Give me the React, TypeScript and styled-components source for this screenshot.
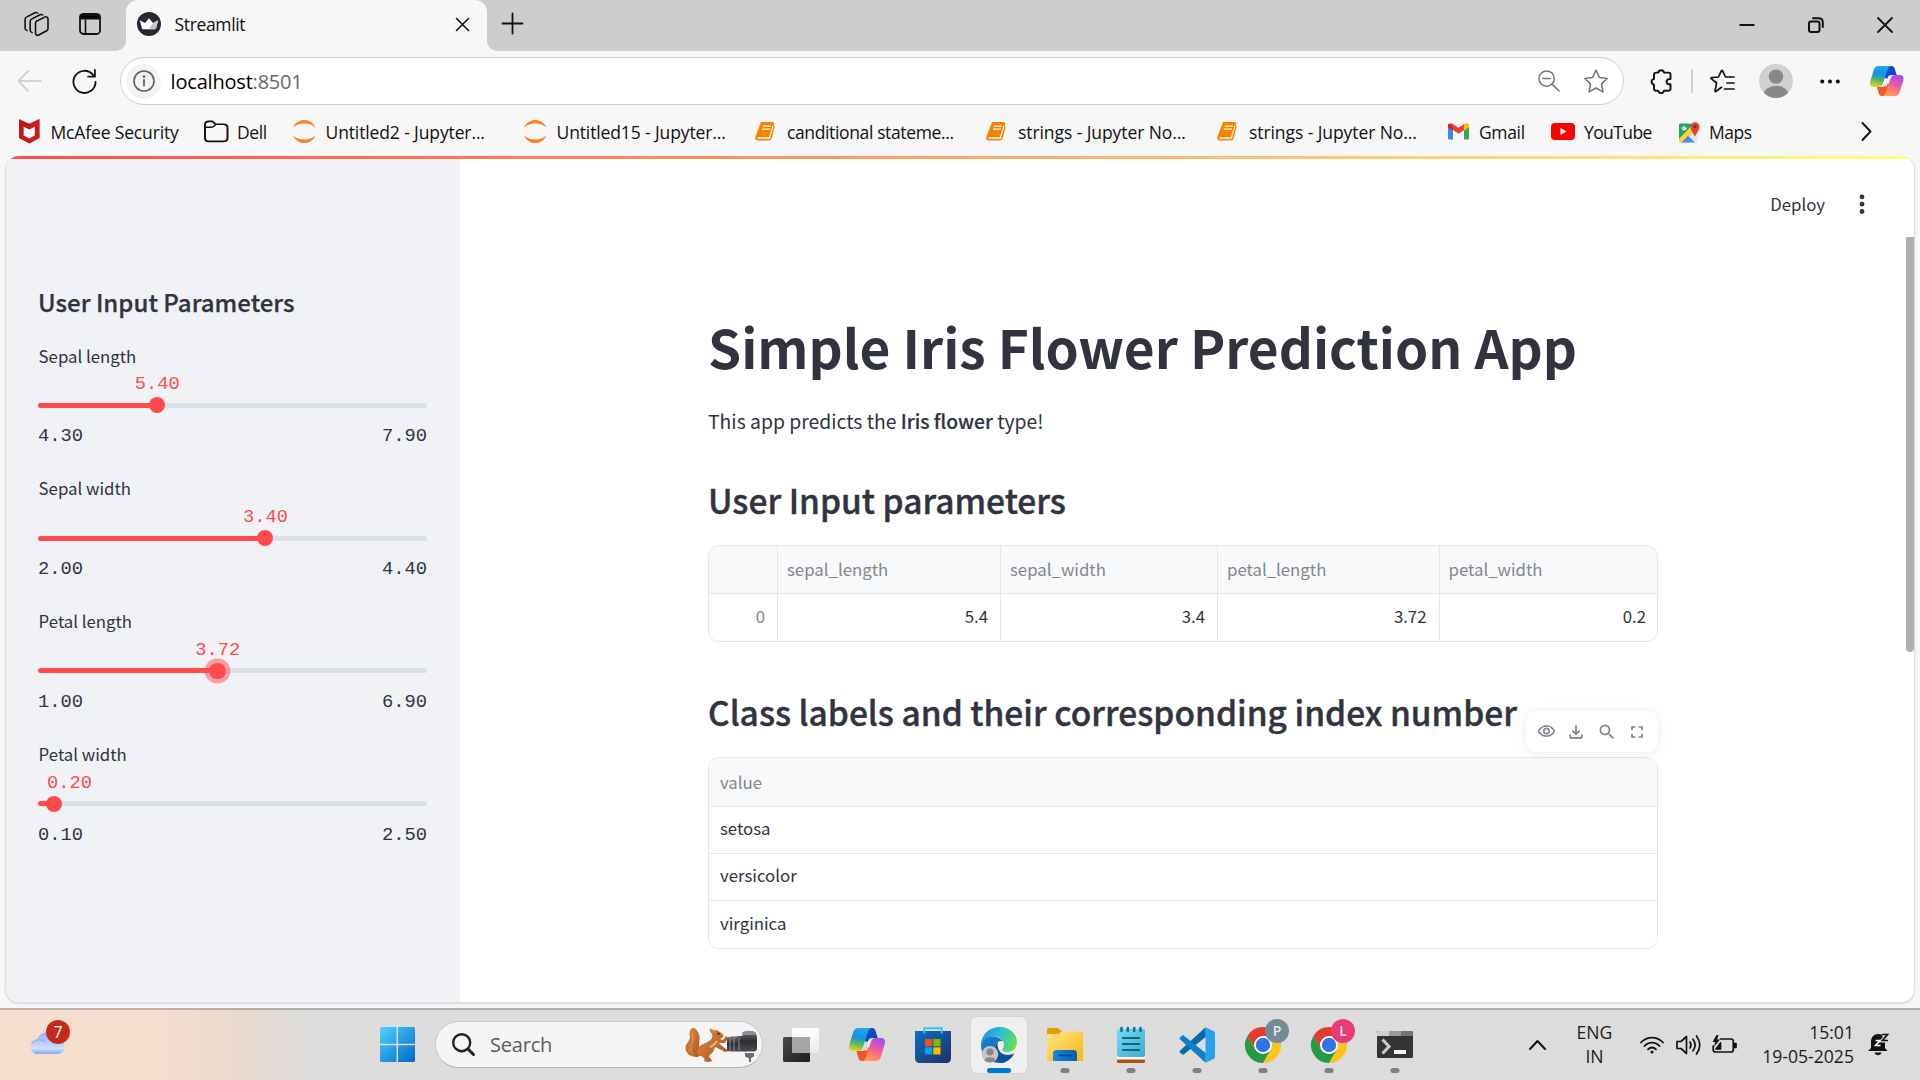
import React from "react";
import styled, { createGlobalStyle, css } from "styled-components";
import { MdOutlineVisibility, MdOutlineFileDownload, MdSearch, MdFullscreen } from "react-icons/md";

const UI = `"Open Sans", "Noto Sans", sans-serif`;
const SOURCE = `"Noto Sans CJK SC", "Open Sans", sans-serif`;
const MONO = `"Liberation Mono", monospace`;
const INK = "#31333f";
const RED = "#ff4b4b";
const LINE = "#e5e6ea";

const Global = createGlobalStyle`
  * { box-sizing: border-box; }
  html, body { margin: 0; padding: 0; }
  body { width: 1920px; height: 1080px; overflow: hidden; background: #f7f7f7; }
  svg { display: block; flex: none; overflow: visible; }
  h1, h2, p { margin: 0; }
`;

const Screen = styled.div`
  width: 1920px;
  height: 1080px;
  display: flex;
  flex-direction: column;
  background: #f7f7f7;
  font-family: ${UI};
  color: #111;
`;

/* ---------- browser frame ---------- */
const TabStrip = styled.header`
  height: 51px;
  flex: none;
  display: flex;
  background: #cdcdcd;
`;
const StripTools = styled.div`
  width: 126px;
  display: flex;
  align-items: center;
  padding: 0 0 3px 24px;
  gap: 30px;
`;
const Tab = styled.div`
  position: relative;
  width: 361px;
  height: 51px;
  display: flex;
  align-items: center;
  padding: 0 17px 3px 11px;
  background: #f7f7f7;
  border-radius: 12px 12px 0 0;
  &::before,
  &::after {
    content: "";
    position: absolute;
    bottom: 0;
    width: 10px;
    height: 10px;
  }
  &::before {
    left: -10px;
    background: radial-gradient(circle at 0 0, transparent 9.5px, #f7f7f7 10px);
  }
  &::after {
    right: -10px;
    background: radial-gradient(circle at 100% 0, transparent 9.5px, #f7f7f7 10px);
  }
`;
const TabTitle = styled.span`
  flex: 1;
  margin-left: 13.5px;
  font-size: 17.5px;
  line-height: 24px;
  letter-spacing: -0.35px;
`;
const NewTab = styled.div`
  display: flex;
  align-items: center;
  padding: 0 0 4px 15px;
`;
const WindowButtons = styled.div`
  margin-left: auto;
  display: flex;
  align-items: center;
  gap: 53px;
  padding: 0 27px 1px 0;
`;

const Toolbar = styled.div`
  height: 60px;
  flex: none;
  display: flex;
  align-items: center;
`;
const NavButtons = styled.div`
  width: 120px;
  display: flex;
  align-items: center;
  gap: 30px;
  padding-left: 17px;
`;
const Address = styled.div`
  width: 1504px;
  height: 48px;
  display: flex;
  align-items: center;
  padding: 0 14px 0 5px;
  background: #fff;
  border: 1.5px solid #cfcfcf;
  border-radius: 24px;
`;
const InfoBadge = styled.div`
  width: 35px;
  height: 35px;
  display: grid;
  place-items: center;
  border-radius: 50%;
  background: #f3f3f3;
`;
const Url = styled.div`
  flex: 1;
  margin-left: 9.6px;
  padding-top: 1px;
  font-size: 20px;
  line-height: 28px;
  letter-spacing: -0.2px;
  color: #666;
  b { font-weight: 400; color: #000; }
`;
const AddressIcons = styled.div`
  display: flex;
  align-items: center;
  gap: 23px;
`;
const ToolbarIcons = styled.div`
  flex: 1;
  display: flex;
  align-items: center;
  padding-left: 25px;
`;
const Divider = styled.i`
  width: 2px;
  height: 24px;
  margin: 0 16.5px 0 18px;
  background: #cfcfcf;
`;
const Avatar = styled.div`
  margin: 0 27px 0 24.5px;
`;
const CopilotSlot = styled.div`
  margin-left: 29.5px;
`;

const Bookmarks = styled.nav`
  height: 45px;
  flex: none;
  display: flex;
  align-items: center;
  padding: 0 48px 4px 19px;
`;
const Bookmark = styled.div<{ $w: number; $gap?: number; $ls?: number }>`
  flex: none;
  width: ${(p) => p.$w}px;
  display: flex;
  align-items: center;
  gap: ${(p) => p.$gap ?? 9}px;
  font-size: 17.5px;
  line-height: 24px;
  letter-spacing: ${(p) => p.$ls ?? 0}px;
  white-space: nowrap;
`;
const Overflow = styled.div`
  margin-left: auto;
`;

/* ---------- page ---------- */
const Page = styled.main`
  width: 1910px;
  height: 847px;
  margin: 0 0 5px 5px;
  flex: none;
  display: flex;
  flex-direction: column;
  border: 1px solid #dfdfe1;
  border-top: 0;
  border-radius: 14px;
  background: #fff;
  overflow: hidden;
  box-shadow: 0 1px 2px rgba(0, 0, 0, 0.12);
  font-family: ${SOURCE};
  color: ${INK};
`;
const Decoration = styled.div`
  height: 3px;
  flex: none;
  background: linear-gradient(90deg, #ff4b4b, #fffd80);
`;
const Split = styled.div`
  flex: 1;
  display: flex;
`;
const Sidebar = styled.aside`
  width: 454px;
  flex: none;
  padding: 126.6px 33px 0 32px;
  background: #f0f2f6;
`;
const SideTitle = styled.h2`
  margin-bottom: 26px;
  font-size: 24.05px;
  line-height: 32px;
  font-weight: 500;
  -webkit-text-stroke: 0.25px ${INK};
`;
const Field = styled.div`
  height: 105.3px;
  margin-bottom: 27.6px;
  display: flex;
  flex-direction: column;
`;
const FieldLabel = styled.div`
  padding-left: 0.6px;
  font-size: 16.8px;
  line-height: 24px;
`;
const Slider = styled.div`
  height: 40.6px;
  margin-top: 7.3px;
  padding-top: 27.8px;
  position: relative;
`;
const Track = styled.div`
  height: 5px;
  border-radius: 3px;
  background: #dbdfea;
`;
const Fill = styled.div`
  height: 5px;
  border-radius: 3px 0 0 3px;
  background: ${RED};
`;
const Thumb = styled.i<{ $focus?: boolean }>`
  position: absolute;
  top: 22.1px;
  width: 16.4px;
  height: 16.4px;
  margin-left: -8.2px;
  border-radius: 50%;
  background: ${RED};
  ${(p) => p.$focus && css`box-shadow: 0 0 0 4.4px rgba(255, 75, 75, 0.5);`}
`;
const ThumbValue = styled.span`
  position: absolute;
  top: -1px;
  width: 46px;
  margin-left: -22px;
  font-family: ${MONO};
  font-size: 18.75px;
  line-height: 20px;
  color: ${RED};
`;
const Range = styled.div`
  margin-top: 8.6px;
  display: flex;
  justify-content: space-between;
  font-family: ${MONO};
  font-size: 18.75px;
  line-height: 24px;
`;

const Main = styled.section`
  flex: 1;
  display: flex;
  flex-direction: column;
`;
const AppHeader = styled.div`
  height: 78px;
  flex: none;
  display: flex;
  align-items: center;
  justify-content: flex-end;
  gap: 32px;
  padding: 12px 46px 0 0;
  font-size: 16.8px;
  line-height: 24px;
`;
const Scroller = styled.div`
  flex: 1;
  display: flex;
  justify-content: flex-end;
`;
const ScrollThumb = styled.i`
  width: 8px;
  height: 415px;
  border-radius: 0 0 4px 4px;
  background: #aeaeb3;
`;
const Article = styled.div`
  width: 950px;
  margin: 0 auto;
  padding-top: 77px;
`;
const Title = styled.h1`
  font-size: 53.15px;
  line-height: 64px;
  font-weight: 700;
  white-space: nowrap;
`;
const Lead = styled.p`
  margin-top: 27.7px;
  font-size: 19.35px;
  line-height: 30px;
  b { font-weight: 500; -webkit-text-stroke: 0.2px ${INK}; }
`;
const Heading = styled.h2<{ $top: number }>`
  margin-top: ${(p) => p.$top}px;
  margin-bottom: 24.6px;
  font-size: 33.5px;
  line-height: 40px;
  font-weight: 500;
  -webkit-text-stroke: 0.4px ${INK};
  white-space: nowrap;
`;
const Grid = styled.div<{ $cols: string }>`
  position: relative;
  display: grid;
  grid-template-columns: ${(p) => p.$cols};
  border: 1px solid ${LINE};
  border-radius: 11px;
  font-size: 16.8px;
  line-height: 24px;
`;
const Cell = styled.div<{ $head?: boolean; $muted?: boolean; $right?: boolean; $last?: boolean; $h: number; $bottom?: boolean; $round?: string; $left?: number }>`
  height: ${(p) => p.$h}px;
  display: flex;
  align-items: center;
  justify-content: ${(p) => (p.$right ? "flex-end" : "flex-start")};
  padding: 0 ${(p) => (p.$last ? 11 : 12)}px ${(p) => (p.$head ? 0.8 : 3.3)}px ${(p) => p.$left ?? 9}px;
  background: ${(p) => (p.$head ? "#f8f9fb" : "#fff")};
  color: ${(p) => (p.$head || p.$muted ? "#84868f" : INK)};
  border-right: ${(p) => (p.$last ? "0" : `1px solid ${LINE}`)};
  border-bottom: ${(p) => (p.$bottom ? "0" : `1px solid ${LINE}`)};
  border-radius: ${(p) => p.$round ?? "0"};
`;
const FloatTools = styled.div`
  position: absolute;
  right: -1px;
  top: -47px;
  width: 132px;
  height: 41px;
  display: flex;
  align-items: center;
  justify-content: space-between;
  padding: 0 11px;
  border-radius: 11px;
  background: #fff;
  box-shadow: 0 1px 12px rgba(0, 0, 0, 0.09);
  color: #7f818b;
`;

/* ---------- taskbar ---------- */
const Taskbar = styled.footer`
  height: 72px;
  flex: none;
  display: flex;
  align-items: center;
  padding-bottom: 1px;
  border-top: 2px solid rgba(120, 120, 120, 0.45);
  background: linear-gradient(90deg, #f7dfcf 0, #f6dece 160px, #e8d9cd 250px, #dedddc 300px, #dcdcdc 100%);
`;
const Widgets = styled.div`
  width: 364px;
  padding: 0 0 3px 30px;
  display: flex;
`;
const WeatherBadge = styled.span`
  width: 24px;
  height: 24px;
  margin: -11px 0 11px -20px;
  display: grid;
  place-items: center;
  z-index: 1;
  border-radius: 50%;
  background: #c42b1c;
  color: #fff;
  font-size: 16px;
  line-height: 20px;
`;
const TaskCell = styled.div<{ $active?: boolean }>`
  position: relative;
  width: 56px;
  height: 56px;
  margin: 0 5px;
  display: grid;
  place-items: center;
  flex: none;
  border-radius: 6px;
  ${(p) => p.$active && css`background: #efefef; box-shadow: 0 0 0 1px #d5d5d5;`}
`;
const Running = styled.i<{ $active?: boolean }>`
  position: absolute;
  bottom: -0.5px;
  left: 50%;
  width: ${(p) => (p.$active ? 24 : 9)}px;
  height: 5px;
  transform: translateX(-50%);
  border-radius: 3px;
  background: ${(p) => (p.$active ? "#0078d4" : "#808080")};
`;
const ProfileBadge = styled.span<{ $bg: string }>`
  position: absolute;
  right: 2px;
  top: 2px;
  width: 24px;
  height: 24px;
  display: grid;
  place-items: center;
  border-radius: 50%;
  background: ${(p) => p.$bg};
  color: #e6eaec;
  font: 600 14px/20px ${UI};
`;
const SearchBox = styled.div`
  width: 328px;
  height: 47px;
  margin: 0 5px 0 5px;
  padding: 0 4px 0 16px;
  display: flex;
  align-items: center;
  border: 1.5px solid #cbcbcb;
  border-bottom-color: #b3b3b3;
  border-radius: 24px;
  background: #f5f5f5;
  color: #5c5c5c;
  font-size: 20px;
  line-height: 28px;
  span { flex: 1; margin-left: 15px; letter-spacing: -0.2px; }
`;
const Tray = styled.div`
  margin-left: auto;
  display: flex;
  align-items: center;
  padding-right: 30px;
`;
const Stack = styled.div<{ $align: string; $w: number; $left?: number }>`
  width: ${(p) => p.$w}px;
  margin-left: ${(p) => p.$left ?? 0}px;
  text-align: ${(p) => p.$align};
  font-size: 17.6px;
  line-height: 23.6px;
  color: #1b1b1b;
`;
const StatusIcons = styled.div`
  display: flex;
  align-items: center;
  gap: 11.5px;
  margin: 0 23px 0 13px;
`;
const BellSlot = styled.div`
  margin-left: 14px;
  margin-top: -1px;
`;

/* ---------- icons ---------- */
const line = { fill: "none", stroke: "#111", strokeWidth: 1.6, strokeLinecap: "round" as const, strokeLinejoin: "round" as const };

const Copilot = ({ w, h, id }: { w: number; h: number; id: string }) => (
  <svg width={w} height={h} viewBox="0 0 36 33" preserveAspectRatio="none">
    <defs>
      <linearGradient id={id + "a"} x1="0.4" y1="0" x2="0.2" y2="1">
        <stop offset="0" stopColor="#1aa7ee" /><stop offset=".4" stopColor="#1b8fe0" /><stop offset=".65" stopColor="#4fb86a" /><stop offset="1" stopColor="#f4d516" />
      </linearGradient>
      <linearGradient id={id + "b"} x1="0.7" y1="0" x2="0.3" y2="1">
        <stop offset="0" stopColor="#a44df0" /><stop offset=".45" stopColor="#ee5aa0" /><stop offset="1" stopColor="#ffa24a" />
      </linearGradient>
      <linearGradient id={id + "c"} x1="0" y1="0" x2="1" y2="1">
        <stop offset="0" stopColor="#1553d8" /><stop offset="1" stopColor="#0b3fb4" />
      </linearGradient>
    </defs>
    <path d="M17 0h6c2 0 3 1 3.600 3l2 7h-5c-3 0-4 1-5 4l-3-1z" fill={`url(#${id}c)`} />
    <path d="M19 33h-6c-2 0-3-1-3.600-3l-2-7h5c3 0 4-1 5-4l3 1z" fill="#f2552c" />
    <path d="M9.500 0H23c-2 0-3 1-4 4l-5 15c-1 3-2.500 4-5 4H4c-3.500 0-4.700-2.500-3.700-6L4 4.500C5 1.500 6.500 0 9.500 0z" fill={`url(#${id}a)`} />
    <path d="M26.500 33H13c2 0 3-1 4-4l5-15c1-3 2.500-4 5-4h5c3.500 0 4.700 2.500 3.700 6L32 28.500c-1 3-2.500 4.500-5.500 4.500z" fill={`url(#${id}b)`} />
    <path d="M21.500 10.500 18 22.500h-2.200c.8-.6 1.300-1.500 1.800-3l2-6c.5-1.500 1-2.400 1.900-3z" fill="#f7f7f7" />
  </svg>
);
const McAfee = () => (
  <svg width="20.500" height="24.500" viewBox="0 0 22 29" preserveAspectRatio="none">
    <path d="M0 0l11 5.500L22 0v22.500L11 29 0 22.500z" fill="#c01818" />
    <path d="M5 9l6 3.500L17 9v10.500L11 23l-6-3.500z" fill="#fff" />
    <path d="M11 5.500L22 0v22.500L11 29v-6l6-3.500V9l-6 3.500z" fill="#d8232a" opacity=".55" />
  </svg>
);
const Folder = () => (
  <svg width="24.500" height="23" viewBox="0 0 25 27" preserveAspectRatio="none" {...line} strokeWidth={2}>
    <path d="M1 5.500C1 3 2.500 1.500 5 1.500h3.500L12 5h8c2.500 0 4 1.500 4 4v12c0 2.500-1.500 4-4 4H5c-2.500 0-4-1.500-4-4z" />
    <path d="M1.500 8.500h6.500c1.500 0 2-.5 4-3.500" strokeWidth={1.600} />
  </svg>
);
const Jupyter = () => (
  <svg width="22.500" height="23" viewBox="0 0 23 29" preserveAspectRatio="none" fill="#ff8129">
    <path d="M0 9.500C2.500 2.500 7 0 11.500 0S20.500 2.500 23 9.500C20 6 16 4.300 11.500 4.300S3 6 0 9.500z" />
    <path d="M0 19.500c2.500 7 7 9.500 11.500 9.500s9-2.500 11.500-9.500c-3 3.500-7 5.200-11.500 5.200S3 23 0 19.500z" />
  </svg>
);
const Book = () => (
  <svg width="20" height="18.500" viewBox="0 0 20 22" preserveAspectRatio="none">
    <path d="M6 0h11.500c1.500 0 2 1 1.700 2.300L16 16.500c-.3 1-1 1.500-2 1.500H3.500c-1.500 0-1.500 2 0 2H15l3.800-15.500 1 .8L16.500 20c-.4 1.300-1 2-2.400 2H3C.8 22-.3 20 .2 18z" fill="#f78400" />
    <path d="M7.800 5h8M7 8.500h8" stroke="#fff" strokeWidth="1.400" />
    <path d="M3 19h11.300l3.600-14" stroke="#fff3e0" strokeWidth="1.200" fill="none" />
  </svg>
);
const Gmail = () => (
  <svg width="21" height="16.500" viewBox="0 0 21 19" preserveAspectRatio="none">
    <path d="M0 3v14.500C0 18.500.7 19 1.500 19H5V8z" fill="#4285f4" />
    <path d="M21 3v14.500c0 1-.7 1.500-1.500 1.500H16V8z" fill="#34a853" />
    <path d="M0 3c0-2.500 2.700-3.700 4.500-2l6 4.500 6-4.500 -.5 7-5.500 4.500L5 8 0 5z" fill="#ea4335" />
    <path d="M16 1.500C18.500-.8 21 .5 21 3v2l-5 4z" fill="#fbbc04" />
    <path d="M0 3c0-1 .3-1.700.8-2.200L5 4.500v4L0 5z" fill="#c5221f" />
  </svg>
);
const YouTube = () => (
  <svg width="24" height="17" viewBox="0 0 24 17">
    <rect width="24" height="17" rx="4" fill="#f00" /><path d="M9.500 5l6 3.500-6 3.500z" fill="#fff" />
  </svg>
);
const Maps = () => (
  <svg width="22" height="22" viewBox="0 0 22 23" preserveAspectRatio="none">
    <rect x="1" y="3" width="19" height="19.500" rx="1.500" fill="#e8e8e8" />
    <path d="M1 4.500C1 3.500 1.600 3 2.500 3H17L1 20z" fill="#1fa463" />
    <path d="M1 18.500L14.500 4l4 4L5 22.500H2.500C1.500 22.500 1 22 1 21z" fill="#fdd23b" />
    <path d="M1 18l10-10.500V3H2.500C1.600 3 1 3.500 1 4.500z" fill="#1fa463" />
    <path d="M3.500 22.500l6.500-7 7 7z" fill="#4a8af4" />
    <path d="M8.700 7.300H6.200v1.200h1.300a1.700 1.700 0 1 1-.4-1.900" fill="none" stroke="#fff" strokeWidth="1.100" />
    <path d="M17 17c-.4-3.500-4.600-6.500-4.600-11a4.600 4.600 0 0 1 9.200 0c0 4.500-4.200 7.500-4.600 11z" fill="#e5412f" />
    <circle cx="17" cy="5.500" r="1.700" fill="#8e2116" />
  </svg>
);
const Person = () => (
  <svg width="34" height="34" viewBox="0 0 34 34">
    <defs><clipPath id="avatarClip"><circle cx="17" cy="17" r="17" /></clipPath></defs>
    <circle cx="17" cy="17" r="17" fill="#d2d0ce" />
    <g clipPath="url(#avatarClip)" fill="#8a8886"><circle cx="17" cy="12.600" r="7.200" /><ellipse cx="17" cy="31" rx="12.500" ry="9.300" /></g>
  </svg>
);
const Chrome = () => (
  <svg width="36" height="36" viewBox="0 0 36 36">
    <path d="M18 9h15.600A18 18 0 0 1 18 36l7.800-13.500z" fill="#fcc31e" />
    <path d="M2.400 9A18 18 0 0 1 33.600 9H18L10.200 22.500z" fill="#e33b2e" />
    <path d="M2.400 9L10.200 22.500 18 27l7.800-4.500L18 36A18 18 0 0 1 2.400 9z" fill="#249a41" />
    <circle cx="18" cy="18" r="9" fill="#fff" /><circle cx="18" cy="18" r="7.200" fill="#2f74ea" />
  </svg>
);
const WindowsLogo = () => (
  <svg width="35" height="35" viewBox="0 0 35 35">
    <defs><linearGradient id="win" gradientUnits="userSpaceOnUse" x1="0" y1="0" x2="35" y2="35"><stop stopColor="#4fd3ff" /><stop offset="1" stopColor="#0067c9" /></linearGradient></defs>
    <path fill="url(#win)" d="M1 0h15.500v16.800H0V1zM18 0h16l1 1v15.800H18zM0 18.300h16.500V35H1l-1-1zM18 18.300h17V34l-1 1H18z" />
  </svg>
);
const Squirrel = () => (
  <svg width="73" height="36" viewBox="0 0 73 36">
    <defs>
      <linearGradient id="fur" x1="0" y1="0" x2="1" y2="1"><stop stopColor="#dd8a45" /><stop offset="1" stopColor="#a9541d" /></linearGradient>
      <linearGradient id="cam" x1="0" y1="0" x2="0" y2="1"><stop stopColor="#6d6f76" /><stop offset=".5" stopColor="#2c2e33" /><stop offset="1" stopColor="#4b4d54" /></linearGradient>
    </defs>
    <path d="M9 .500C4 2 4 6 5 10 5 14 1 16 .500 20 0 25 4 30 13 30l4-5c-5-3-2-9-2.500-15C14 5 11 2 9 .500z" fill="url(#fur)" />
    <path d="M7 6c1 5 2 7 0 11s-2 7 1 10" stroke="#eba867" strokeWidth="1.200" fill="none" opacity=".7" />
    <path d="M13 22c2-5 7-5 11-8 3-2 4-4 3-7-2-2-3-4-2-5.500 2 .5 4 1.500 5 2.500 1-2 2-2 3 0 3 1 5 3 5.500 5-.5 2-2.500 2-3.500 3l3 1 3-4 2 2-3 5h-6c2 3 6 4 9 8l-3 1c-3-2-7-4-10-5-1 5-4 7-6 9 0 2 3 3 3 5-3 1.500-7 1-8 0 2-3-2-5-5-5-2-3-2-5-1-7z" fill="url(#fur)" />
    <path d="M25 20c3-1 5-3 7-6" stroke="#f2c79a" strokeWidth="2" fill="none" opacity=".8" />
    <circle cx="33.500" cy="6.800" r="1" fill="#1c0d04" />
    <path d="M42 10.500l4-1h7v15h-7l-4-.5z" fill="url(#cam)" />
    <path d="M52.500 9h5V6.500c2-3 11-3 13.500 0l1 4v12l-2 2H52.500z" fill="url(#cam)" />
    <path d="M45 10v14M49 9.500v15M54 9.500v14" stroke="#8b8d94" strokeWidth="1" />
    <path d="M57 6c2-3 12-3 14 0l-1 2H58z" fill="#8d8f97" />
    <path d="M60 26h9v3.500l-3 1.500v4h-2v-3.500l-4-2z" fill="#6a6c72" />
  </svg>
);
const TaskView = () => (
  <svg width="36" height="34" viewBox="0 0 36 34">
    <defs><linearGradient id="tvd" x1="0" y1="0" x2="1" y2="1"><stop stopColor="#4c4b49" /><stop offset="1" stopColor="#1d1d1d" /></linearGradient><linearGradient id="tvl" x1="0" y1="0" x2="0" y2="1"><stop stopColor="#fff" /><stop offset="1" stopColor="#eaeaea" /></linearGradient></defs>
    <rect y="9" width="27" height="25" rx="1.500" fill="url(#tvd)" />
    <rect x="9" y="0" width="27" height="25" rx="1.500" fill="url(#tvl)" />
    <rect x="9" y="9" width="18" height="16" fill="#a6a5a4" />
  </svg>
);
const Store = () => (
  <svg width="36" height="36" viewBox="0 0 36 36">
    <defs><linearGradient id="st" x1="0" y1="0" x2="1" y2="1"><stop stopColor="#0b6fc4" /><stop offset="1" stopColor="#1f3160" /></linearGradient></defs>
    <path d="M0 4h36v27c0 3-1.500 5-5 5H5c-3.500 0-5-2-5-5z" fill="url(#st)" />
    <path d="M9.300 6.500V1.300h17.400v5.200" fill="none" stroke="#2fc4fa" strokeWidth="2" />
    <path d="M10 12h7.300v7.300H10z" fill="#f25022" /><path d="M18.300 12h7.200v7.300h-7.200z" fill="#7fba00" /><path d="M10 20.300h7.300v7.200H10z" fill="#00a4ef" /><path d="M18.300 20.300h7.200v7.200h-7.200z" fill="#ffb900" />
  </svg>
);
const Edge = () => (
  <svg width="36" height="36" viewBox="0 0 36 36">
    <defs>
      <linearGradient id="eg1" x1="0" y1=".3" x2="1" y2=".6"><stop stopColor="#2493d8" /><stop offset=".5" stopColor="#2fc0cd" /><stop offset="1" stopColor="#66e04f" /></linearGradient>
      <linearGradient id="eg2" x1="0" y1="0" x2=".6" y2="1"><stop stopColor="#1a86d4" /><stop offset="1" stopColor="#0b59a8" /></linearGradient>
    </defs>
    <path d="M0 18C0 8 8 0 18.500 0 29 0 36 7 36 15c0 6-4.500 10-9.500 10-4 0-5-1.500-5-2.500 0-1.500 1.500-2 1.500-5C23 13 18.500 9.500 13 9.500 6 9.500 1 13 0 18z" fill="url(#eg1)" />
    <path d="M0 18C1 12 6.500 9 12.500 9.500c4.500.4 8 2.500 9.500 5-3.500-1.500-8 1-8 7 0 8 6 14.500 12 13C15 38.500 0 34 0 18z" fill="url(#eg2)" />
    <path d="M14 21.500c0-3 1-5.500 3-6.800-1 3-.5 7 2 10 3.500 4 10 4 14.500 1.500C30 32.500 25 36 19 36c-3-3-5-9-5-14.500z" fill="#0d4f9c" />
    <circle cx="9" cy="27.300" r="8.300" fill="#c9c7c5" /><circle cx="9" cy="24.800" r="3.600" fill="#8a8886" /><path d="M3.400 33.200c1-3.800 10.200-3.800 11.200 0-3 3-8.200 3-11.200 0z" fill="#8a8886" />
  </svg>
);
const Explorer = () => (
  <svg width="36" height="33" viewBox="0 0 36 33">
    <defs><linearGradient id="ex" x1="0" y1="0" x2="1" y2="1"><stop stopColor="#ffe38a" /><stop offset="1" stopColor="#f9b80c" /></linearGradient><linearGradient id="exb" x1="0" y1="0" x2="1" y2="0"><stop stopColor="#1588dc" /><stop offset="1" stopColor="#0a5cb4" /></linearGradient></defs>
    <path d="M0 2c0-1.500.7-2 2-2h9l4 3.500-3.500 3H0z" fill="#dfa100" />
    <path d="M0 6h11.500L15 3.500h19.500l1.500 1V33H0z" fill="url(#ex)" />
    <path d="M6 33v-7.500c0-2.500 1.500-3.500 3.500-3.500h17c2.500 0 3.500 1.500 3.500 3.500V33z" fill="url(#exb)" />
    <path d="M11 27.500h14" stroke="#0a4a93" strokeWidth="1.600" />
  </svg>
);
const Notepad = () => (
  <svg width="28" height="36" viewBox="0 0 28 36">
    <defs><linearGradient id="np" x1="0" y1="0" x2="1" y2="1"><stop stopColor="#74def2" /><stop offset="1" stopColor="#3fa9cc" /></linearGradient></defs>
    <rect y="31" width="28" height="5" rx="1.500" fill="#b4500f" /><rect y="29" width="28" height="3.500" fill="#f5f5f5" />
    <rect y="2" width="28" height="28" rx="2" fill="url(#np)" />
    <path d="M5 11h18M5 17h18M5 23h18" stroke="#0f6586" strokeWidth="2" />
    <path d="M4.500 1v3M10.800 1v3M17.200 1v3M23.500 1v3" stroke="#17708f" strokeWidth="2.600" strokeLinecap="round" />
  </svg>
);
const VsCode = () => (
  <svg width="36" height="36" viewBox="0 0 36 36">
    <path d="M26.500.300L1.200 23.400c-.8.700-.8 1.700 0 2.400l1.800 1.500c.7.500 1.400.5 2 0L27 9.800z" fill="#0a69ac" />
    <path d="M26.500 35.700L1.200 12.600c-.8-.7-.8-1.700 0-2.400L3 8.700c.7-.5 1.400-.5 2 0L27 26.200z" fill="#0f80c8" />
    <path d="M26.500 35.700V.300l8 3.700c.9.400 1.500 1.200 1.500 2.300v23.400c0 1.100-.6 1.900-1.500 2.300z" fill="#27a0ee" />
  </svg>
);
const Terminal = () => (
  <svg width="36" height="27" viewBox="0 0 36 27">
    <rect width="36" height="27" rx="1.500" fill="#343434" />
    <path d="M1.500 0H12v5H0V1.500z" fill="#cfcfcf" /><path d="M12 0h12v5H12z" fill="#9b9b9b" /><path d="M24 0h10.500L36 1.500V5H24z" fill="#747474" />
    <path d="M5.500 8.500l6.500 7-6.500 7" fill="none" stroke="#c9c9c9" strokeWidth="3.200" /><path d="M17 19h12v4H17z" fill="#f2f2f2" />
  </svg>
);
const Cloud = () => (
  <svg width="36" height="23" viewBox="0 0 36 24">
    <defs><linearGradient id="cl" x1="0" y1="0" x2="0" y2="1"><stop stopColor="#8fb0f2" /><stop offset=".75" stopColor="#cfe0fb" /><stop offset="1" stopColor="#7fa6f0" /></linearGradient></defs>
    <path d="M7.500 24a7.500 7.500 0 0 1-.8-15A10.500 10.500 0 0 1 27 9.500a7.300 7.300 0 0 1 1.700 14.500z" fill="url(#cl)" />
    <path d="M1 13c3-5 11-5 14.500-1" fill="none" stroke="#86a5ea" strokeWidth="1.500" opacity=".6" />
  </svg>
);

const sliders = [
  { label: "Sepal length", min: 4.3, max: 7.9, value: 5.4 },
  { label: "Sepal width", min: 2, max: 4.4, value: 3.4 },
  { label: "Petal length", min: 1, max: 6.9, value: 3.72, focus: true },
  { label: "Petal width", min: 0.1, max: 2.5, value: 0.2 },
];

const SliderField = ({ label, min, max, value, focus }: { label: string; min: number; max: number; value: number; focus?: boolean }) => {
  const x = ((value - min) / (max - min)) * 389;
  return (
    <Field>
      <FieldLabel>{label}</FieldLabel>
      <Slider>
        <ThumbValue style={{ left: Math.max(x, 31) }}>{value.toFixed(2)}</ThumbValue>
        <Track><Fill style={{ width: x }} /></Track>
        <Thumb $focus={focus} style={{ left: x }} />
      </Slider>
      <Range><span>{min.toFixed(2)}</span><span>{max.toFixed(2)}</span></Range>
    </Field>
  );
};

const columns = ["sepal_length", "sepal_width", "petal_length", "petal_width"];
const values = ["5.4", "3.4", "3.72", "0.2"];
const classes = ["setosa", "versicolor", "virginica"];

export default function App() {
  return (
    <Screen>
      <Global />
      <TabStrip>
        <StripTools>
          <svg width="25" height="25" viewBox="0 0 25 25" {...line}>
            <path d="M11.500 11.200c0-1 .4-1.700 1.300-2.200l8-3.900c1.700-.8 3.200.1 3.200 1.900v9.500c0 1-.4 1.700-1.300 2.200l-8 4.300c-1.700.9-3.200 0-3.200-1.900z" />
            <path d="M8 20.500c-1.200-.2-1.800-1-1.800-2.200v-9c0-1 .4-1.700 1.300-2.200l8.500-4.300c1-.5 2-.4 2.700.2" />
            <path d="M3 18.500c-1.200-.2-1.900-1-1.900-2.200v-9c0-1 .4-1.700 1.300-2.200l8.500-4.300c1-.5 2-.4 2.700.2" />
          </svg>
          <svg width="22" height="22" viewBox="0 0 22 22" {...line} strokeWidth={1.800}>
            <rect x="1" y="1" width="20" height="20" rx="3.500" /><path d="M1.500 2h19v3.500h-19z" fill="#000" /><path d="M6.500 7v14" strokeWidth={1.600} />
          </svg>
        </StripTools>
        <Tab>
          <svg width="24" height="24" viewBox="0 0 24 24">
            <circle cx="12" cy="12" r="12" fill="#262730" />
            <path d="M2.800 8.200l5.200 2.900L12 6.300l4 4.800 5.200-2.900-2 7.800c-.2.800-.7 1.200-1.500 1.200H6.300c-.8 0-1.300-.4-1.500-1.200z" fill="#fff" />
            <path d="M21.200 8.200L16 11.100 12 17.200h5.700c.8 0 1.300-.4 1.500-1.200z" fill="#c4c4c8" />
          </svg>
          <TabTitle>Streamlit</TabTitle>
          <svg width="15" height="15" viewBox="0 0 15 15" {...line}><path d="M1.500 1.500l12 12m0-12l-12 12" /></svg>
        </Tab>
        <NewTab><svg width="21" height="21" viewBox="0 0 21 21" {...line} strokeWidth={1.800}><path d="M10.500.500v20M.500 10.500h20" /></svg></NewTab>
        <WindowButtons>
          <svg width="16" height="16" viewBox="0 0 16 16" {...line} strokeWidth={2} strokeLinecap="butt"><path d="M.500 8h15" /></svg>
          <svg width="16" height="16" viewBox="0 0 16 16" {...line} strokeWidth={2}><rect x="1" y="4.500" width="10.500" height="10.500" rx="2" /><path d="M5 1.200h5.500c2.800 0 4.300 1.500 4.300 4.300V10" /></svg>
          <svg width="16" height="16" viewBox="0 0 16 16" {...line} strokeWidth={1.800}><path d="M1 1l14 14m0-14L1 15" /></svg>
        </WindowButtons>
      </TabStrip>

      <Toolbar>
        <NavButtons>
          <svg width="25" height="22" viewBox="0 0 25 22" {...line} stroke="#c9c9c9"><path d="M24 11H1.500M11 1L1.500 11 11 21" /></svg>
          <svg width="25" height="25" viewBox="0 0 26 26" {...line} strokeWidth={1.900}><path d="M24.500 13.500A11.500 11.500 0 1 1 22 6.200M23.800 1v7h-7" /></svg>
        </NavButtons>
        <Address>
          <InfoBadge>
            <svg width="22" height="22" viewBox="0 0 22 22" {...line} stroke="#5f5f5f"><circle cx="11" cy="11" r="10" /><path d="M11 10v5.500" strokeWidth={1.800} /><circle cx="11" cy="6.600" r=".6" fill="#5f5f5f" /></svg>
          </InfoBadge>
          <Url><b>localhost</b>:8501</Url>
          <AddressIcons>
            <svg width="22" height="22" viewBox="0 0 23 23" {...line} stroke="#757575"><circle cx="9" cy="9" r="8" /><path d="M5 9h8M15 15l7 7" /></svg>
            <svg width="26" height="25" viewBox="0 0 24 24" {...line} stroke="#757575" strokeWidth={1.500}><path d="M12 1.200l3.300 6.900 7.500 1-5.500 5.200 1.400 7.600L12 18.200l-6.700 3.700 1.400-7.600L1.200 9.100l7.500-1z" /></svg>
          </AddressIcons>
        </Address>
        <ToolbarIcons>
          <svg width="24" height="25" viewBox="0 0 24 25" {...line} strokeWidth={1.900}>
            <path d="M9.300 3.600a2.900 2.900 0 0 1 5.700 0h4.300c1.300 0 2.200.9 2.200 2.200v4.300h-1.300a2.600 2.600 0 0 0 0 5.200h1.300v4.300c0 1.300-.9 2.200-2.200 2.200H15a2.900 2.900 0 0 1-5.700 0H7.200C5.900 21.800 5 20.900 5 19.600v-4a2.900 2.900 0 0 1 0-5.700v-4c0-1.400.9-2.300 2.200-2.300z" />
          </svg>
          <Divider />
          <svg width="25" height="25" viewBox="0 0 25 25" {...line} strokeWidth={1.700}><path d="M11.500 18.300L5.800 22.500c-.5.300-1 0-.8-.6L6.600 14 1.200 9.700c-.4-.4-.2-.9.300-1L8.500 8l3-6.400c.3-.5.8-.5 1 0L15.500 8H24M17 14h7M14.500 20H24" /></svg>
          <Avatar><Person /></Avatar>
          <svg width="20" height="5" viewBox="0 0 20 5"><circle cx="2.200" cy="2.500" r="2" /><circle cx="10" cy="2.500" r="2" /><circle cx="17.800" cy="2.500" r="2" /></svg>
          <CopilotSlot><Copilot w={33.5} h={30} id="top" /></CopilotSlot>
        </ToolbarIcons>
      </Toolbar>

      <Bookmarks>
        <Bookmark $w={184.5} $gap={11} $ls={-0.15}><McAfee />McAfee Security</Bookmark>
        <Bookmark $w={89} $ls={-0.4}><Folder />Dell</Bookmark>
        <Bookmark $w={231} $gap={10.5} $ls={-0.12}><Jupyter />Untitled2 - Jupyter...</Bookmark>
        <Bookmark $w={231.5} $gap={10.5} $ls={-0.12}><Jupyter />Untitled15 - Jupyter...</Bookmark>
        <Bookmark $w={231} $gap={12} $ls={-0.37}><Book />canditional stateme...</Bookmark>
        <Bookmark $w={231} $gap={12} $ls={-0.08}><Book />strings - Jupyter No...</Bookmark>
        <Bookmark $w={231} $gap={12} $ls={-0.08}><Book />strings - Jupyter No...</Bookmark>
        <Bookmark $w={103} $gap={10} $ls={-0.35}><Gmail />Gmail</Bookmark>
        <Bookmark $w={127} $ls={-0.6}><YouTube />YouTube</Bookmark>
        <Bookmark $w={80} $gap={9} $ls={-0.5}><Maps />Maps</Bookmark>
        <Overflow><svg width="11" height="19" viewBox="0 0 11 19" {...line} strokeWidth={1.900}><path d="M1.500 1l8 8.500-8 8.500" /></svg></Overflow>
      </Bookmarks>

      <Page>
        <Decoration />
        <Split>
          <Sidebar>
            <SideTitle>User Input Parameters</SideTitle>
            {sliders.map((s) => <SliderField key={s.label} {...s} />)}
          </Sidebar>
          <Main>
            <AppHeader>
              <span>Deploy</span>
              <svg width="11" height="20" viewBox="0 0 11 20" fill={INK}><circle cx="5" cy="2.900" r="2.400" /><circle cx="5" cy="10.200" r="2.400" /><circle cx="5" cy="17.500" r="2.400" /></svg>
            </AppHeader>
            <Scroller>
              <Article>
                <Title>Simple Iris Flower Prediction App</Title>
                <Lead>This app predicts the <b>Iris flower</b> type!</Lead>
                <Heading $top={44.8}>User Input parameters</Heading>
                <Grid $cols="69px 223px 217px 221.500px 1fr">
                  <Cell $head $h={48} $round="10px 0 0 0" />
                  {columns.map((c, i) => <Cell key={c} $head $h={48} $last={i === 3} $round={i === 3 ? "0 10px 0 0" : undefined}>{c}</Cell>)}
                  <Cell $muted $right $bottom $h={47} $round="0 0 0 10px">0</Cell>
                  {values.map((v, i) => <Cell key={v} $right $bottom $h={47} $last={i === 3} $round={i === 3 ? "0 0 10px 0" : undefined}>{v}</Cell>)}
                </Grid>
                <Heading $top={50.4}>Class labels and their corresponding index number</Heading>
                <Grid $cols="1fr">
                  <Cell $head $last $h={49} $left={11} $round="10px 10px 0 0">value</Cell>
                  {classes.map((c, i) => <Cell key={c} $last $h={47} $left={11} $bottom={i === 2} $round={i === 2 ? "0 0 10px 10px" : undefined}>{c}</Cell>)}
                  <FloatTools>
                    <MdOutlineVisibility size={19} /><MdOutlineFileDownload size={20} /><MdSearch size={20} /><MdFullscreen size={20} />
                  </FloatTools>
                </Grid>
              </Article>
              <ScrollThumb />
            </Scroller>
          </Main>
        </Split>
      </Page>

      <Taskbar>
        <Widgets><Cloud /><WeatherBadge>7</WeatherBadge></Widgets>
        <TaskCell><WindowsLogo /></TaskCell>
        <SearchBox>
          <svg width="23" height="23" viewBox="0 0 23 23" {...line} stroke="#222" strokeWidth={2.400}><circle cx="9.700" cy="9.700" r="8.500" /><path d="M16 16l5.500 5.500" strokeWidth={3} /></svg>
          <span>Search</span>
          <Squirrel />
        </SearchBox>
        <TaskCell><TaskView /></TaskCell>
        <TaskCell><Copilot w={36} h={33} id="dock" /></TaskCell>
        <TaskCell><Store /></TaskCell>
        <TaskCell $active><Edge /><Running $active /></TaskCell>
        <TaskCell><Explorer /><Running /></TaskCell>
        <TaskCell><Notepad /><Running /></TaskCell>
        <TaskCell><VsCode /><Running /></TaskCell>
        <TaskCell><Chrome /><ProfileBadge $bg="#738b97">P</ProfileBadge><Running /></TaskCell>
        <TaskCell><Chrome /><ProfileBadge $bg="#ea3a78">L</ProfileBadge><Running /></TaskCell>
        <TaskCell><Terminal /><Running /></TaskCell>
        <Tray>
          <svg width="17" height="10" viewBox="0 0 17 10" {...line} strokeWidth={2}><path d="M1 9l7.500-8L16 9" /></svg>
          <Stack $align="center" $w={65} $left={16}>ENG<br />IN</Stack>
          <StatusIcons>
            <svg width="24" height="18" viewBox="0 0 24 18" {...line} strokeWidth={1.800}><path d="M1 6.500c6-6.500 16-6.500 22 0M4.500 10c4-4.500 11-4.500 15 0M8 13.300c2.300-2.400 5.700-2.400 8 0" /><circle cx="12" cy="16" r="1.500" fill="#111" stroke="none" /></svg>
            <svg width="25" height="20" viewBox="0 0 25 20" {...line} strokeWidth={1.700}><path d="M1 6.500v7h4l5.500 5V1.500L5 6.500zM14 7c1.300 2 1.300 4 0 6M17 4.200c2.800 3.800 2.800 7.800 0 11.600M20.500 1c4.400 6 4.400 12 0 18" /></svg>
            <svg width="25" height="19" viewBox="0 0 25 19" {...line} strokeWidth={1.700}><path d="M8.500 4H19c1.500 0 2.300.8 2.300 2.300v8.400c0 1.500-.8 2.300-2.300 2.300H3.500C2 17 1.200 16.200 1.200 14.700V11" /><path d="M22 8.500h2v4h-2z" fill="#111" /><path d="M4.500 0L.500 7h2.700L2 12l6-7.500H5.200L6.500 0z" fill="#111" stroke="none" /><path d="M8.500 8v6H4z" fill="#111" /></svg>
          </StatusIcons>
          <Stack $align="right" $w={94}>15:01<br />19-05-2025</Stack>
          <BellSlot>
            <svg width="22" height="24" viewBox="0 0 22 24">
              <path d="M3 16V10C3 5 6 2 10.500 2c3 0 5.500 1.500 6.500 4v10l2.500 3H0z" fill="#111" /><path d="M6.500 20.500h7c-.8 3.500-6.200 3.500-7 0z" fill="#111" />
              <path d="M7.500 8.500h4.500L7.500 13.500h5" fill="none" stroke="#fff" strokeWidth="1.600" /><path d="M14 2.500h5.500L14.500 8.500h5.500" fill="none" stroke="#dcdcdc" strokeWidth="4" /><path d="M14 2.500h5.500L14.500 8.500h5.500" fill="none" stroke="#111" strokeWidth="1.700" />
            </svg>
          </BellSlot>
        </Tray>
      </Taskbar>
    </Screen>
  );
}
